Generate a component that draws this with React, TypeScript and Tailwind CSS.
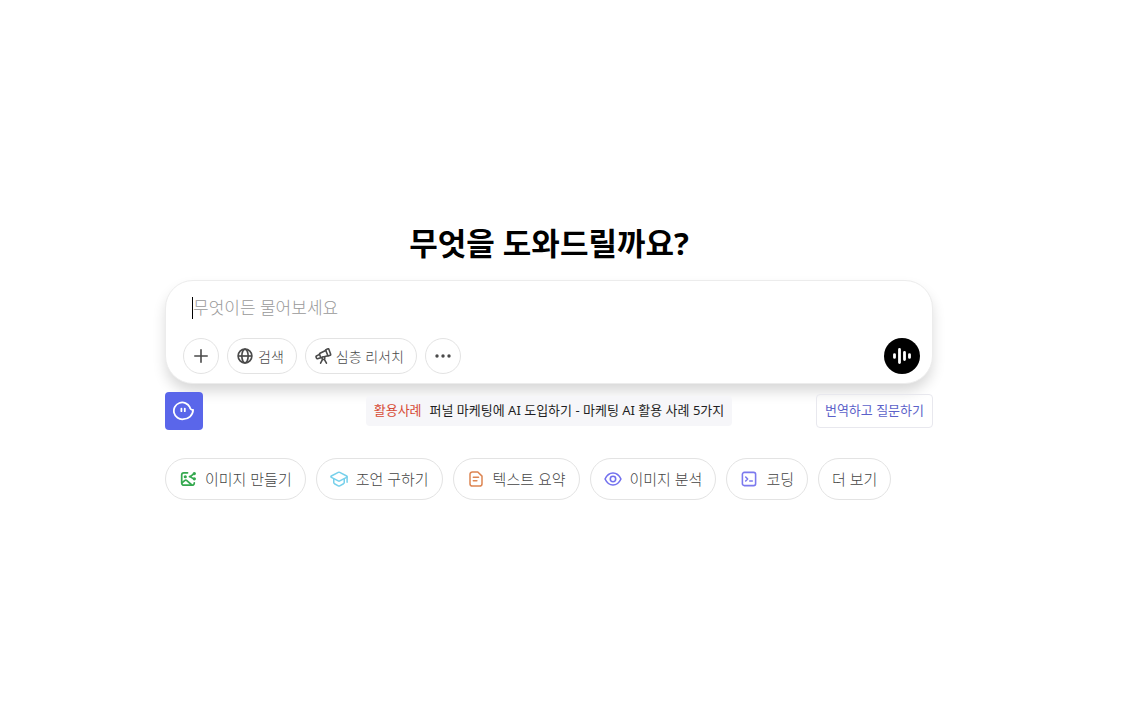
import { useState } from 'react';
import type { FunctionComponent, ReactNode } from 'react';

const PlusIcon = () => (
  <svg className="size-4" viewBox="0 0 16 16" fill="none" stroke="currentColor" strokeWidth="1.6" strokeLinecap="round">
    <path d="M8 1.8v12.4M1.8 8h12.4" />
  </svg>
);

const GlobeIcon = () => (
  <svg className="size-[18px]" viewBox="0 0 24 24" fill="none" stroke="currentColor" strokeWidth="2.2">
    <circle cx="12" cy="12" r="9.2" />
    <ellipse cx="12" cy="12" rx="4.2" ry="9.2" />
    <path d="M3 12h18" />
  </svg>
);

const TelescopeIcon = () => (
  <svg className="size-[18px]" viewBox="0 0 24 24" fill="none" stroke="currentColor" strokeWidth="2.1" strokeLinecap="round" strokeLinejoin="round">
    <path d="M15.4 3.8l3-1.4c.6-.3 1.2 0 1.4.5l2.4 6.8c.2.6 0 1.1-.6 1.3l-2.9 1z" />
    <path d="M15.6 4.6L8 8.4c-.6.3-.8.8-.6 1.4l1.3 3.6c.2.6.8.9 1.4.7l8.2-2.3" />
    <path d="M7.4 9.8l-4.2 2.1c-.5.3-.7.7-.5 1.3l.7 1.8c.2.5.6.7 1.2.6l4.4-1.4" />
    <circle cx="12.6" cy="14.8" r="1.9" fill="white" />
    <path d="M11.4 16.6L8.8 21.6M13.8 16.6l2.8 5" />
  </svg>
);

const DotsIcon = () => (
  <svg className="size-[18px]" viewBox="0 0 18 18" fill="currentColor">
    <circle cx="3" cy="9" r="1.7" />
    <circle cx="9" cy="9" r="1.7" />
    <circle cx="15" cy="9" r="1.7" />
  </svg>
);

const VoiceIcon = () => (
  <svg className="size-5" viewBox="0 0 20 20" fill="none" stroke="currentColor" strokeWidth="2.8" strokeLinecap="round">
    <path d="M2.5 8.6v2.8M7.5 3.4v13.2M12.5 6.4v7.2M17.5 8.6v2.8" />
  </svg>
);

const GhostIcon = () => (
  <svg className="size-[22px]" viewBox="0 0 22 22" fill="none" stroke="currentColor" strokeWidth="1.8" strokeLinecap="round" strokeLinejoin="round">
    <path d="M16.8 7.2A8.4 8.4 0 1 0 10.4 19.2C15.4 19.2 20 15.4 20.1 9.8C18.6 10.2 17.2 9.2 16.8 7.2z" />
    <path d="M8.4 8.6v2.6M11.8 8.6v2.6" />
  </svg>
);

const ImageIcon = () => (
  <svg className="size-[18px]" viewBox="0 0 24 24" fill="none" stroke="currentColor" strokeWidth="2.3" strokeLinecap="round" strokeLinejoin="round">
    <path d="M11.4 3.8H6.4A2.8 2.8 0 0 0 3.6 6.6v10.8a2.8 2.8 0 0 0 2.8 2.8h11.2a2.8 2.8 0 0 0 2.8-2.8V17" />
    <circle cx="8.4" cy="9" r="1" fill="currentColor" />
    <path d="M4 17l3.6-2.8c1-.8 2-.7 2.9.1l6.2 5.4" />
    <path d="M20 5.2c-1.8.4-2.6 3-6 3.6 2.8.6 4 2.8 6.2 3" />
    <circle cx="20.4" cy="4.8" r="1.1" fill="currentColor" />
    <circle cx="20.4" cy="11.8" r="1.1" fill="currentColor" />
  </svg>
);

const CapIcon = () => (
  <svg className="size-[18px]" viewBox="0 0 24 24" fill="none" stroke="currentColor" strokeWidth="2" strokeLinecap="round" strokeLinejoin="round">
    <path d="M11 3.2L1.8 8c-.8.4-.8 1.4 0 1.8l9.2 4.8c.6.3 1.4.3 2 0l9.2-4.8c.8-.4.8-1.4 0-1.8L13 3.2c-.6-.3-1.4-.3-2 0z" />
    <path d="M5 12v4.6c0 .7.4 1.3 1 1.7l5 2.8c.6.3 1.4.3 2 0l5-2.8c.6-.4 1-1 1-1.7V12M22.8 9.4v6.8" />
  </svg>
);

const DocumentIcon = () => (
  <svg className="size-[18px]" viewBox="0 0 24 24" fill="none" stroke="currentColor" strokeWidth="2" strokeLinecap="round" strokeLinejoin="round">
    <path d="M14.4 2.6H7.2A3.2 3.2 0 0 0 4 5.8v12.4a3.2 3.2 0 0 0 3.2 3.2h9.6a3.2 3.2 0 0 0 3.2-3.2V8.2z" />
    <path d="M8.4 9.8h7M8.4 14.4h4.8" />
  </svg>
);

const EyeIcon = () => (
  <svg className="size-[18px]" viewBox="0 0 24 24" fill="none" stroke="currentColor" strokeWidth="2.1" strokeLinejoin="round">
    <path d="M1.4 12C3.8 7 7.6 4 12 4s8.2 3 10.6 8C20.2 17 16.4 20 12 20S3.8 17 1.4 12z" />
    <circle cx="12" cy="12" r="3.6" />
  </svg>
);

const CodeIcon = () => (
  <svg className="size-[18px]" viewBox="0 0 24 24" fill="none" stroke="currentColor" strokeWidth="2.1" strokeLinecap="round" strokeLinejoin="round">
    <rect x="3.2" y="3.2" width="17.6" height="17.6" rx="2.6" />
    <path d="M7.6 9.4l2.6 2.6-2.6 2.6M13 14.6h3.4" />
  </svg>
);

type Suggestion = { label: string; icon?: ReactNode; color?: string };

const SUGGESTIONS: Suggestion[] = [
  { label: '이미지 만들기', icon: <ImageIcon />, color: 'text-[#35a94f]' },
  { label: '조언 구하기', icon: <CapIcon />, color: 'text-[#76d0eb]' },
  { label: '텍스트 요약', icon: <DocumentIcon />, color: 'text-[#dd8552]' },
  { label: '이미지 분석', icon: <EyeIcon />, color: 'text-[#7270ee]' },
  { label: '코딩', icon: <CodeIcon />, color: 'text-[#7b79ee]' },
  { label: '더 보기' },
];

const ROUND_BUTTON =
  'flex h-9 shrink-0 items-center justify-center rounded-full border border-[#e3e3e3] text-[#4a4a4a]';

const Composer: FunctionComponent = () => {
  const [prompt, setPrompt] = useState('');

  return (
    <form
      className="rounded-[28px] border border-[#ececec] bg-white pt-4 pr-3 pb-[9px] pl-[17px] shadow-[0_8px_14px_-1px_rgba(0,0,0,0.16)]"
      onSubmit={(e) => e.preventDefault()}
    >
      <div className="flex h-[22px] items-center pl-[9px]">
        <span className="h-full w-px bg-black" />
        <input
          type="text"
          aria-label="무엇이든 물어보세요"
          placeholder="무엇이든 물어보세요"
          value={prompt}
          onChange={(e) => setPrompt(e.target.value)}
          className="min-w-0 flex-1 text-[17px] leading-[22px] text-black outline-none placeholder:text-[#999999]"
        />
      </div>
      <div className="mt-[19px] flex items-center gap-2 text-[14px]">
        <button type="button" aria-label="추가" className={`${ROUND_BUTTON} w-9`}>
          <PlusIcon />
        </button>
        <button type="button" className={`${ROUND_BUTTON} gap-1 pr-3 pl-2`}>
          <GlobeIcon />
          검색
        </button>
        <button type="button" className={`${ROUND_BUTTON} gap-1 pr-3 pl-2`}>
          <TelescopeIcon />
          심층 리서치
        </button>
        <button type="button" aria-label="더 보기" className={`${ROUND_BUTTON} w-9`}>
          <DotsIcon />
        </button>
        <button
          type="submit"
          aria-label="음성 모드"
          className="ml-auto flex size-9 items-center justify-center rounded-full bg-black text-white"
        >
          <VoiceIcon />
        </button>
      </div>
    </form>
  );
};

const App: FunctionComponent = () => (
  <main className="flex min-h-screen flex-col justify-center bg-white pt-1.5 pr-10 font-['Noto_Sans','Noto_Sans_CJK_KR',sans-serif] font-light">
    <div className="mx-auto w-full max-w-3xl">
      <h1 className="text-center text-[31px] leading-[38px] font-bold text-black">
        무엇을 도와드릴까요?
      </h1>
      <div className="mt-[18px]">
        <Composer />
      </div>
      <div className="mt-2 grid grid-cols-[1fr_auto_1fr] items-center text-[13px] font-normal">
        <button
          type="button"
          aria-label="도우미"
          className="flex size-[38px] items-center justify-center rounded bg-[#5a66ea] text-white"
        >
          <GhostIcon />
        </button>
        <a
          href="#"
          className="flex h-[30px] items-center gap-2 rounded bg-[#f6f6f9] px-2 text-[#1f1f24]"
        >
          <span className="text-[#d64a35]">활용사례</span>
          퍼널 마케팅에 AI 도입하기 - 마케팅 AI 활용 사례 5가지
        </a>
        <button
          type="button"
          className="h-[34px] justify-self-end rounded border border-[#e8e8ee] px-2 text-[#5c62c9]"
        >
          번역하고 질문하기
        </button>
      </div>
      <div className="mt-7 flex flex-wrap gap-[10px]">
        {SUGGESTIONS.map(({ label, icon, color }) => (
          <button
            type="button"
            key={label}
            className="flex h-[42px] items-center gap-2 rounded-full border border-[#e3e3e3] px-[13px] text-[15px] text-[#444444]"
          >
            {icon && <span className={color}>{icon}</span>}
            {label}
          </button>
        ))}
      </div>
    </div>
  </main>
);

export default App;
